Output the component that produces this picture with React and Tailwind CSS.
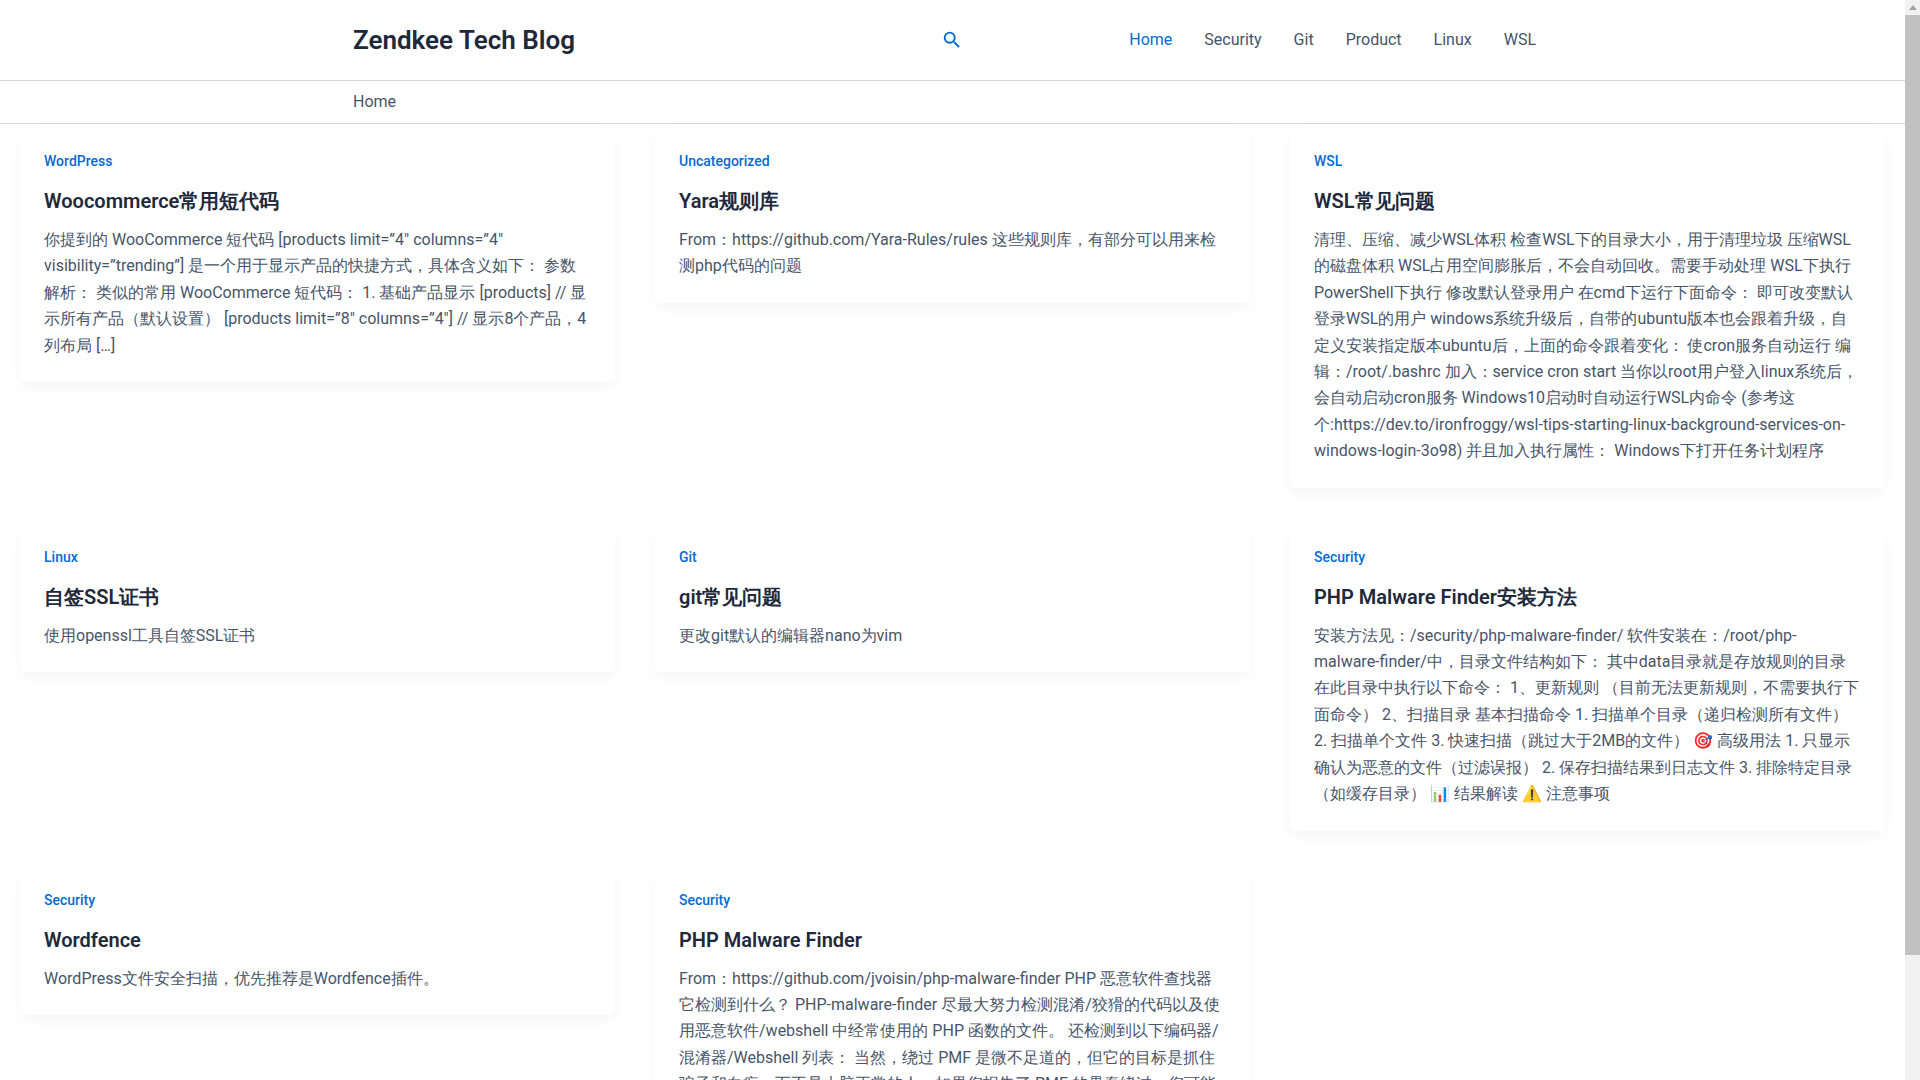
const posts = [
  { c: 'WordPress', t: 'Woocommerce常用短代码', b: '你提到的 WooCommerce 短代码 [products limit=”4″ columns=”4″ visibility=”trending”] 是一个用于显示产品的快捷方式，具体含义如下： 参数解析： 类似的常用 WooCommerce 短代码： 1. 基础产品显示 [products] // 显示所有产品（默认设置） [products limit=”8″ columns=”4″] // 显示8个产品，4列布局 […]' },
  { c: 'Uncategorized', t: 'Yara规则库', b: 'From：https://github.com/Yara-Rules/rules 这些规则库，有部分可以用来检测php代码的问题' },
  { c: 'WSL', t: 'WSL常见问题', b: '清理、压缩、减少WSL体积 检查WSL下的目录大小，用于清理垃圾 压缩WSL的磁盘体积 WSL占用空间膨胀后，不会自动回收。需要手动处理 WSL下执行 PowerShell下执行 修改默认登录用户 在cmd下运行下面命令： 即可改变默认登录WSL的用户 windows系统升级后，自带的ubuntu版本也会跟着升级，自定义安装指定版本ubuntu后，上面的命令跟着变化： 使cron服务自动运行 编辑：/root/.bashrc 加入：service cron start 当你以root用户登入linux系统后，会自动启动cron服务 Windows10启动时自动运行WSL内命令 (参考这个:https://dev.to/ironfroggy/wsl-tips-starting-linux-background-services-on-windows-login-3o98) 并且加入执行属性： Windows下打开任务计划程序' },
  { c: 'Linux', t: '自签SSL证书', b: '使用openssl工具自签SSL证书' },
  { c: 'Git', t: 'git常见问题', b: '更改git默认的编辑器nano为vim' },
  { c: 'Security', t: 'PHP Malware Finder安装方法', b: '安装方法见：/security/php-malware-finder/ 软件安装在：/root/php-malware-finder/中，目录文件结构如下： 其中data目录就是存放规则的目录 在此目录中执行以下命令： 1、更新规则 （目前无法更新规则，不需要执行下面命令） 2、扫描目录 基本扫描命令 1. 扫描单个目录（递归检测所有文件） 2. 扫描单个文件 3. 快速扫描（跳过大于2MB的文件） 🎯 高级用法 1. 只显示确认为恶意的文件（过滤误报） 2. 保存扫描结果到日志文件 3. 排除特定目录（如缓存目录） 📊 结果解读 ⚠️ 注意事项' },
  { c: 'Security', t: 'Wordfence', b: 'WordPress文件安全扫描，优先推荐是Wordfence插件。' },
  { c: 'Security', t: 'PHP Malware Finder', b: 'From：https://github.com/jvoisin/php-malware-finder PHP 恶意软件查找器 它检测到什么？ PHP-malware-finder 尽最大努力检测混淆/狡猾的代码以及使用恶意软件/webshell 中经常使用的 PHP 函数的文件。 还检测到以下编码器/混淆器/Webshell 列表： 当然，绕过 PMF 是微不足道的，但它的目标是抓住骗子和白痴，而不是大脑正常的人。如果您报告了 PMF 的愚蠢绕过，您可能是白痴。' },
];

const nav = ['Home', 'Security', 'Git', 'Product', 'Linux', 'WSL'];

function Card({ p }) {
  return (
    <article className="bg-white rounded-md px-6 pt-5 pb-[23px] shadow-[0_6px_15px_-2px_rgba(16,24,40,0.05)]">
      <div className="text-[14px] leading-[23px] font-medium text-[#046bd2]">{p.c}</div>
      <h2 className="mt-[14px] text-[20px] leading-[28px] font-semibold text-[#1e293b]">{p.t}</h2>
      <p className="mt-3 text-[16px] leading-[26.4px] text-[#475569]">{p.b}</p>
    </article>
  );
}

export default function App() {
  return (
    <div className="flex h-screen overflow-hidden bg-white font-[Roboto,'Noto_Sans',sans-serif]">
      <div className="w-[1905px] shrink-0 overflow-hidden">
        <header className="h-[81px] border-b border-[#d1d5db] pl-[353px] pr-[369px] flex items-center">
          <div className="w-[588px] text-[26px] font-semibold text-[#1e293b]">Zendkee Tech Blog</div>
          <svg width="22" height="22" viewBox="0 0 24 24" fill="#046bd2"><path d="M15.5 14h-.79l-.28-.27A6.47 6.47 0 0 0 16 9.5 6.5 6.5 0 1 0 9.5 16c1.61 0 3.09-.59 4.23-1.57l.27.28v.79l5 4.99L20.49 19l-4.99-5zm-6 0C7.01 14 5 11.99 5 9.5S7.01 5 9.5 5 14 7.01 14 9.5 11.99 14 9.5 14z"/></svg>
          <nav className="ml-auto flex gap-8 text-[16px] text-[#475569]">
            {nav.map((n, i) => <span key={n} className={i === 0 ? 'text-[#046bd2]' : ''}>{n}</span>)}
          </nav>
        </header>
        <div className="h-[43px] border-b border-[#d1d5db] pl-[353px] flex items-center text-[16px] text-[#475569]">Home</div>
        <main className="grid grid-cols-3 gap-x-10 gap-y-[38px] items-start px-5 pt-[6px]">
          {posts.map((p, i) => <Card key={i} p={p} />)}
        </main>
      </div>
      <div className="w-[15px] bg-[#f1f1f1] flex flex-col">
        <div className="h-[15px] flex items-center justify-center">
          <div className="w-0 h-0 border-x-[4px] border-x-transparent border-b-[5px] border-b-[#a3a3a3]" />
        </div>
        <div className="h-[940px] bg-[#c1c1c1]" />
      </div>
    </div>
  );
}
